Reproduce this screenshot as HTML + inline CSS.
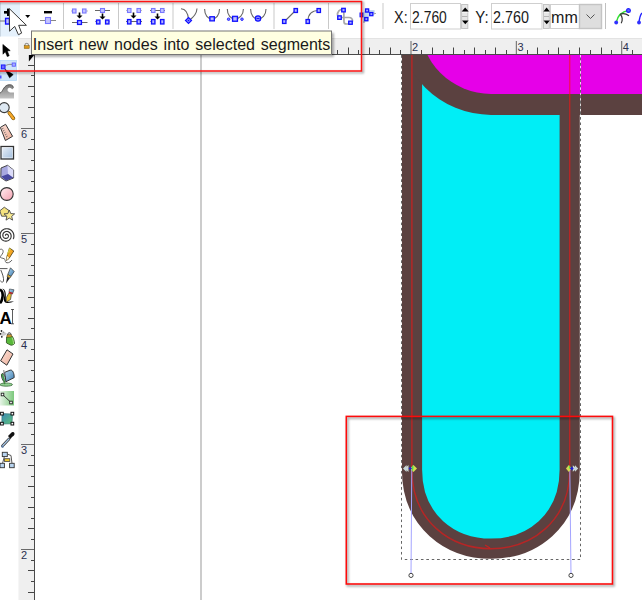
<!DOCTYPE html>
<html><head><meta charset="utf-8">
<style>
html,body{margin:0;padding:0;background:#fff;overflow:hidden;}
body{width:642px;height:600px;position:relative;font-family:"Liberation Sans",sans-serif;}
svg{position:absolute;left:0;top:0;}
.rl{font-family:"Liberation Sans",sans-serif;font-size:11px;fill:#2a3050;}
.tt{font-family:"Liberation Sans",sans-serif;font-size:17px;fill:#1a1a1a;word-spacing:1.5px;}
.ui{font-family:"Liberation Sans",sans-serif;font-size:15.6px;fill:#1a1a1a;}
</style></head><body>
<svg width="642" height="600" viewBox="0 0 642 600">
<defs>
<filter id="blur1" x="-10%" y="-10%" width="120%" height="120%"><feGaussianBlur stdDeviation="1"/></filter>
<filter id="sh" x="-5%" y="-5%" width="110%" height="110%"><feDropShadow dx="1" dy="1.5" stdDeviation="1" flood-color="#000" flood-opacity="0.35"/></filter>
</defs>
<rect x="0" y="0" width="642" height="600" fill="#fff"/>
<!-- canvas -->
<rect x="200.25" y="55" width="1.5" height="545" fill="#bcbcbc"/>
<path d="M412,20 V468.5 C411,575.4 571,575.4 569.7,468.5 V20 Z" fill="#00eef6" stroke="#5b4140" stroke-width="20.2"/>
<path d="M398,22 L398,20 H700 V114.9 H491 A92.9,92.9 0 0 1 398.1,22 Z" fill="#5b4140"/>
<path d="M419.7,20 H700 V93.9 H491 A71.4,71.4 0 0 1 419.6,22.5 Z" fill="#e600e8"/>
<!-- bbox dashed -->
<g stroke="#666" stroke-width="1" stroke-dasharray="2.8,2.6" fill="none">
<path d="M401.5,55 V559.5 H580.5 V55"/>
</g>
<g stroke="#fff" stroke-width="1" stroke-dasharray="2.4,3" stroke-dashoffset="-3" fill="none" opacity="0.8">
<path d="M401.5,55 V559.5 H580.5 V55"/>
</g>
<!-- red path outline -->
<path d="M411.9,55 V468.5 C411,575.4 571,575.4 569.7,468.5 V55" fill="none" stroke="#ff1010" stroke-opacity="0.56" stroke-width="1.45"/>
<path d="M485,545 L490,548" stroke="#ff1010" stroke-opacity="0.62" stroke-width="1.4" fill="none"/>
<!-- handles -->
<line x1="411.8" y1="468.5" x2="411" y2="575.4" stroke="#a4a4ff" stroke-width="1"/>
<line x1="569.8" y1="468.5" x2="571" y2="575.4" stroke="#a4a4ff" stroke-width="1"/>
<circle cx="411" cy="575.4" r="2.1" fill="#fff" stroke="#333" stroke-width="0.9"/>
<circle cx="571" cy="575.4" r="2.1" fill="#fff" stroke="#333" stroke-width="0.9"/>
<!-- left node -->
<path d="M403,468.5 L406.5,465 L406.5,466.8 L408.5,465 L408.5,472 L406.5,470.2 L406.5,472 Z" fill="#c8d6d6"/>
<path d="M413.5,465 L417,468.5 L413.5,472 L410,468.5 Z" fill="#d8dc50"/>
<path d="M412,465.2 L413.6,466.8 L413.2,470 L412,471.6 Z" fill="#50e050"/>
<path d="M410.3,466.8 L412,468.5 L410.3,470.2 L408.6,468.5 Z" fill="#2020d0"/>
<!-- right node -->
<path d="M578.2,468.5 L575,465.2 L575,466.9 L572.8,465.2 L572.8,471.8 L575,470.1 L575,471.8 Z" fill="#c8d6d6"/>
<path d="M568.8,465 L571.6,468.5 L568.8,472 L566,468.5 Z" fill="#d4d850"/>
<path d="M569.3,465.4 L570.8,467.4 L569.6,469 L568.9,467 Z" fill="#50e050"/>
<path d="M571.8,466.6 L573.7,468.5 L571.8,470.4 L569.9,468.5 Z" fill="#2020d0"/>
<!-- lower red rect -->
<rect x="346.3" y="416.4" width="266.2" height="167.6" fill="none" stroke="#000" stroke-opacity="0.32" stroke-width="2.2" transform="translate(1.3,1.6)" filter="url(#blur1)"/>
<rect x="346.3" y="416.4" width="266.2" height="167.6" fill="none" stroke="#ff0a0a" stroke-width="1.55"/>

<!-- rulers -->
<rect x="35" y="38" width="607" height="16" fill="#efefef"/>
<rect x="18" y="55" width="16" height="545" fill="#efefef"/>
<rect x="18" y="55" width="1" height="545" fill="#f6f6f6"/>
<rect x="18" y="38" width="17" height="17" fill="#efefef"/>
<rect x="18" y="38" width="624" height="1" fill="#e3e3e3"/>
<rect x="35" y="54" width="607" height="1" fill="#4a4a4a"/>
<rect x="34" y="55" width="1" height="545" fill="#4a4a4a"/>
<line x1="42.5" y1="50" x2="42.5" y2="54" stroke="#444" stroke-width="1"/>
<line x1="53.5" y1="47.5" x2="53.5" y2="54" stroke="#444" stroke-width="1"/>
<line x1="63.5" y1="50" x2="63.5" y2="54" stroke="#444" stroke-width="1"/>
<line x1="74.5" y1="47.5" x2="74.5" y2="54" stroke="#444" stroke-width="1"/>
<line x1="84.5" y1="50" x2="84.5" y2="54" stroke="#444" stroke-width="1"/>
<line x1="94.95" y1="41" x2="94.95" y2="54" stroke="#707070" stroke-width="1.1"/>
<text x="96.05" y="51" class="rl">-1</text>
<line x1="105.5" y1="50" x2="105.5" y2="54" stroke="#444" stroke-width="1"/>
<line x1="116.5" y1="47.5" x2="116.5" y2="54" stroke="#444" stroke-width="1"/>
<line x1="126.5" y1="50" x2="126.5" y2="54" stroke="#444" stroke-width="1"/>
<line x1="137.5" y1="47.5" x2="137.5" y2="54" stroke="#444" stroke-width="1"/>
<line x1="148.5" y1="50" x2="148.5" y2="54" stroke="#444" stroke-width="1"/>
<line x1="158.5" y1="47.5" x2="158.5" y2="54" stroke="#444" stroke-width="1"/>
<line x1="169.5" y1="50" x2="169.5" y2="54" stroke="#444" stroke-width="1"/>
<line x1="179.5" y1="47.5" x2="179.5" y2="54" stroke="#444" stroke-width="1"/>
<line x1="190.5" y1="50" x2="190.5" y2="54" stroke="#444" stroke-width="1"/>
<line x1="200.30" y1="41" x2="200.30" y2="54" stroke="#707070" stroke-width="1.1"/>
<text x="201.40" y="51" class="rl">0</text>
<line x1="211.5" y1="50" x2="211.5" y2="54" stroke="#444" stroke-width="1"/>
<line x1="221.5" y1="47.5" x2="221.5" y2="54" stroke="#444" stroke-width="1"/>
<line x1="232.5" y1="50" x2="232.5" y2="54" stroke="#444" stroke-width="1"/>
<line x1="242.5" y1="47.5" x2="242.5" y2="54" stroke="#444" stroke-width="1"/>
<line x1="253.5" y1="50" x2="253.5" y2="54" stroke="#444" stroke-width="1"/>
<line x1="263.5" y1="47.5" x2="263.5" y2="54" stroke="#444" stroke-width="1"/>
<line x1="274.5" y1="50" x2="274.5" y2="54" stroke="#444" stroke-width="1"/>
<line x1="284.5" y1="47.5" x2="284.5" y2="54" stroke="#444" stroke-width="1"/>
<line x1="295.5" y1="50" x2="295.5" y2="54" stroke="#444" stroke-width="1"/>
<line x1="305.65" y1="41" x2="305.65" y2="54" stroke="#707070" stroke-width="1.1"/>
<text x="306.75" y="51" class="rl">1</text>
<line x1="316.5" y1="50" x2="316.5" y2="54" stroke="#444" stroke-width="1"/>
<line x1="327.5" y1="47.5" x2="327.5" y2="54" stroke="#444" stroke-width="1"/>
<line x1="337.5" y1="50" x2="337.5" y2="54" stroke="#444" stroke-width="1"/>
<line x1="348.5" y1="47.5" x2="348.5" y2="54" stroke="#444" stroke-width="1"/>
<line x1="358.5" y1="50" x2="358.5" y2="54" stroke="#444" stroke-width="1"/>
<line x1="369.5" y1="47.5" x2="369.5" y2="54" stroke="#444" stroke-width="1"/>
<line x1="379.5" y1="50" x2="379.5" y2="54" stroke="#444" stroke-width="1"/>
<line x1="390.5" y1="47.5" x2="390.5" y2="54" stroke="#444" stroke-width="1"/>
<line x1="400.5" y1="50" x2="400.5" y2="54" stroke="#444" stroke-width="1"/>
<line x1="411.00" y1="41" x2="411.00" y2="54" stroke="#707070" stroke-width="1.1"/>
<text x="412.10" y="51" class="rl">2</text>
<line x1="421.5" y1="50" x2="421.5" y2="54" stroke="#444" stroke-width="1"/>
<line x1="432.5" y1="47.5" x2="432.5" y2="54" stroke="#444" stroke-width="1"/>
<line x1="443.5" y1="50" x2="443.5" y2="54" stroke="#444" stroke-width="1"/>
<line x1="453.5" y1="47.5" x2="453.5" y2="54" stroke="#444" stroke-width="1"/>
<line x1="464.5" y1="50" x2="464.5" y2="54" stroke="#444" stroke-width="1"/>
<line x1="474.5" y1="47.5" x2="474.5" y2="54" stroke="#444" stroke-width="1"/>
<line x1="485.5" y1="50" x2="485.5" y2="54" stroke="#444" stroke-width="1"/>
<line x1="495.5" y1="47.5" x2="495.5" y2="54" stroke="#444" stroke-width="1"/>
<line x1="506.5" y1="50" x2="506.5" y2="54" stroke="#444" stroke-width="1"/>
<line x1="516.35" y1="41" x2="516.35" y2="54" stroke="#707070" stroke-width="1.1"/>
<text x="517.45" y="51" class="rl">3</text>
<line x1="527.5" y1="50" x2="527.5" y2="54" stroke="#444" stroke-width="1"/>
<line x1="537.5" y1="47.5" x2="537.5" y2="54" stroke="#444" stroke-width="1"/>
<line x1="548.5" y1="50" x2="548.5" y2="54" stroke="#444" stroke-width="1"/>
<line x1="558.5" y1="47.5" x2="558.5" y2="54" stroke="#444" stroke-width="1"/>
<line x1="569.5" y1="50" x2="569.5" y2="54" stroke="#444" stroke-width="1"/>
<line x1="579.5" y1="47.5" x2="579.5" y2="54" stroke="#444" stroke-width="1"/>
<line x1="590.5" y1="50" x2="590.5" y2="54" stroke="#444" stroke-width="1"/>
<line x1="601.5" y1="47.5" x2="601.5" y2="54" stroke="#444" stroke-width="1"/>
<line x1="611.5" y1="50" x2="611.5" y2="54" stroke="#444" stroke-width="1"/>
<line x1="621.70" y1="41" x2="621.70" y2="54" stroke="#707070" stroke-width="1.1"/>
<text x="622.80" y="51" class="rl">4</text>
<line x1="632.5" y1="50" x2="632.5" y2="54" stroke="#444" stroke-width="1"/>
<line x1="28" y1="65.5" x2="34" y2="65.5" stroke="#444" stroke-width="1"/>
<line x1="31" y1="75.5" x2="34" y2="75.5" stroke="#444" stroke-width="1"/>
<line x1="28" y1="86.5" x2="34" y2="86.5" stroke="#444" stroke-width="1"/>
<line x1="31" y1="96.5" x2="34" y2="96.5" stroke="#444" stroke-width="1"/>
<line x1="28" y1="107.5" x2="34" y2="107.5" stroke="#444" stroke-width="1"/>
<line x1="31" y1="117.5" x2="34" y2="117.5" stroke="#444" stroke-width="1"/>
<line x1="21" y1="128.5" x2="34" y2="128.5" stroke="#6a6a6a" stroke-width="1"/>
<text x="21" y="137.6" class="rl">6</text>
<line x1="31" y1="139.5" x2="34" y2="139.5" stroke="#444" stroke-width="1"/>
<line x1="28" y1="149.5" x2="34" y2="149.5" stroke="#444" stroke-width="1"/>
<line x1="31" y1="160.5" x2="34" y2="160.5" stroke="#444" stroke-width="1"/>
<line x1="28" y1="170.5" x2="34" y2="170.5" stroke="#444" stroke-width="1"/>
<line x1="31" y1="181.5" x2="34" y2="181.5" stroke="#444" stroke-width="1"/>
<line x1="28" y1="191.5" x2="34" y2="191.5" stroke="#444" stroke-width="1"/>
<line x1="31" y1="202.5" x2="34" y2="202.5" stroke="#444" stroke-width="1"/>
<line x1="28" y1="212.5" x2="34" y2="212.5" stroke="#444" stroke-width="1"/>
<line x1="31" y1="223.5" x2="34" y2="223.5" stroke="#444" stroke-width="1"/>
<line x1="21" y1="233.5" x2="34" y2="233.5" stroke="#6a6a6a" stroke-width="1"/>
<text x="21" y="242.6" class="rl">5</text>
<line x1="31" y1="244.5" x2="34" y2="244.5" stroke="#444" stroke-width="1"/>
<line x1="28" y1="254.5" x2="34" y2="254.5" stroke="#444" stroke-width="1"/>
<line x1="31" y1="265.5" x2="34" y2="265.5" stroke="#444" stroke-width="1"/>
<line x1="28" y1="275.5" x2="34" y2="275.5" stroke="#444" stroke-width="1"/>
<line x1="31" y1="286.5" x2="34" y2="286.5" stroke="#444" stroke-width="1"/>
<line x1="28" y1="297.5" x2="34" y2="297.5" stroke="#444" stroke-width="1"/>
<line x1="31" y1="307.5" x2="34" y2="307.5" stroke="#444" stroke-width="1"/>
<line x1="28" y1="318.5" x2="34" y2="318.5" stroke="#444" stroke-width="1"/>
<line x1="31" y1="328.5" x2="34" y2="328.5" stroke="#444" stroke-width="1"/>
<line x1="21" y1="339.5" x2="34" y2="339.5" stroke="#6a6a6a" stroke-width="1"/>
<text x="21" y="348.6" class="rl">4</text>
<line x1="31" y1="349.5" x2="34" y2="349.5" stroke="#444" stroke-width="1"/>
<line x1="28" y1="360.5" x2="34" y2="360.5" stroke="#444" stroke-width="1"/>
<line x1="31" y1="370.5" x2="34" y2="370.5" stroke="#444" stroke-width="1"/>
<line x1="28" y1="381.5" x2="34" y2="381.5" stroke="#444" stroke-width="1"/>
<line x1="31" y1="391.5" x2="34" y2="391.5" stroke="#444" stroke-width="1"/>
<line x1="28" y1="402.5" x2="34" y2="402.5" stroke="#444" stroke-width="1"/>
<line x1="31" y1="412.5" x2="34" y2="412.5" stroke="#444" stroke-width="1"/>
<line x1="28" y1="423.5" x2="34" y2="423.5" stroke="#444" stroke-width="1"/>
<line x1="31" y1="434.5" x2="34" y2="434.5" stroke="#444" stroke-width="1"/>
<line x1="21" y1="444.5" x2="34" y2="444.5" stroke="#6a6a6a" stroke-width="1"/>
<text x="21" y="453.6" class="rl">3</text>
<line x1="31" y1="455.5" x2="34" y2="455.5" stroke="#444" stroke-width="1"/>
<line x1="28" y1="465.5" x2="34" y2="465.5" stroke="#444" stroke-width="1"/>
<line x1="31" y1="476.5" x2="34" y2="476.5" stroke="#444" stroke-width="1"/>
<line x1="28" y1="486.5" x2="34" y2="486.5" stroke="#444" stroke-width="1"/>
<line x1="31" y1="497.5" x2="34" y2="497.5" stroke="#444" stroke-width="1"/>
<line x1="28" y1="507.5" x2="34" y2="507.5" stroke="#444" stroke-width="1"/>
<line x1="31" y1="518.5" x2="34" y2="518.5" stroke="#444" stroke-width="1"/>
<line x1="28" y1="528.5" x2="34" y2="528.5" stroke="#444" stroke-width="1"/>
<line x1="31" y1="539.5" x2="34" y2="539.5" stroke="#444" stroke-width="1"/>
<line x1="21" y1="549.5" x2="34" y2="549.5" stroke="#6a6a6a" stroke-width="1"/>
<text x="21" y="558.6" class="rl">2</text>
<line x1="31" y1="560.5" x2="34" y2="560.5" stroke="#444" stroke-width="1"/>
<line x1="28" y1="570.5" x2="34" y2="570.5" stroke="#444" stroke-width="1"/>
<line x1="31" y1="581.5" x2="34" y2="581.5" stroke="#444" stroke-width="1"/>
<line x1="28" y1="592.5" x2="34" y2="592.5" stroke="#444" stroke-width="1"/>
<rect x="0" y="0" width="642" height="38" fill="#fff"/>
<rect x="0" y="2.5" width="20" height="34" fill="#e5f1fc"/>
<rect x="0" y="2.5" width="1" height="34" fill="#c9d6e2"/>
<line x1="0" y1="21" x2="12" y2="21" stroke="#777" stroke-width="1"/>
<rect x="4" y="11" width="6" height="2.6" fill="#000"/>
<rect x="7" y="8.6" width="2.2" height="7.4" fill="#000"/>
<rect x="5.5" y="18.3" width="4" height="5.8" fill="#7a7aff" stroke="#1010ff" stroke-width="1.2"/><rect x="6.6" y="19.400000000000002" width="1.7999999999999998" height="3.5999999999999996" fill="#c0c0ff"/>
<path d="M25.2,15 L30.2,15 L27.7,18 Z" fill="#000"/>
<rect x="44" y="11" width="8" height="2.4" fill="#000"/>
<line x1="40" y1="20.5" x2="56" y2="20.5" stroke="#888" stroke-width="1"/>
<rect x="45.5" y="17.5" width="5" height="6" fill="#c4c4ff" stroke="#7878ff" stroke-width="1.1"/>
<rect x="63" y="3" width="1" height="26" fill="#c9c9c9"/>
<line x1="71" y1="11" x2="88" y2="11" stroke="#bbb" stroke-width="1" stroke-dasharray="2,9,2"/>
<rect x="72.5" y="9.0" width="3.5" height="4" fill="#c4c4ff" stroke="#7878ff" stroke-width="1.1"/>
<rect x="82.5" y="9.0" width="3.5" height="4" fill="#c4c4ff" stroke="#7878ff" stroke-width="1.1"/>
<line x1="79.5" y1="12.5" x2="79.5" y2="16.5" stroke="#000" stroke-width="1.6"/><path d="M76.5,15.5 L82.5,15.5 L79.5,18.5 Z" fill="#000"/>
<line x1="72" y1="22.5" x2="87.5" y2="22.5" stroke="#666" stroke-width="1"/>
<rect x="77.5" y="20.5" width="4" height="4" fill="#7a7aff" stroke="#1010ff" stroke-width="1.2"/><rect x="78.6" y="21.6" width="1.7999999999999998" height="1.7999999999999998" fill="#c0c0ff"/>
<line x1="95" y1="10.5" x2="110" y2="10.5" stroke="#666" stroke-width="1"/>
<rect x="100.5" y="8.5" width="4" height="4" fill="#c4c4ff" stroke="#7878ff" stroke-width="1.1"/>
<line x1="102.5" y1="13.5" x2="102.5" y2="17.5" stroke="#000" stroke-width="1.6"/><path d="M99.5,16.5 L105.5,16.5 L102.5,19.5 Z" fill="#000"/>
<line x1="95" y1="21.5" x2="110" y2="21.5" stroke="#999" stroke-width="1" stroke-dasharray="1.5,11.5,1.5"/>
<rect x="96.5" y="20.0" width="3.5" height="4" fill="#7a7aff" stroke="#1010ff" stroke-width="1.2"/><rect x="97.6" y="21.1" width="1.2999999999999998" height="1.7999999999999998" fill="#c0c0ff"/>
<rect x="105.5" y="20.0" width="3.5" height="4" fill="#7a7aff" stroke="#1010ff" stroke-width="1.2"/><rect x="106.6" y="21.1" width="1.2999999999999998" height="1.7999999999999998" fill="#c0c0ff"/>
<rect x="118" y="3" width="1" height="26" fill="#c9c9c9"/>
<rect x="127.5" y="8.5" width="3.5" height="4" fill="#c4c4ff" stroke="#7878ff" stroke-width="1.1"/>
<rect x="137.0" y="8.5" width="3.5" height="4" fill="#c4c4ff" stroke="#7878ff" stroke-width="1.1"/>
<line x1="126" y1="10.5" x2="142" y2="10.5" stroke="#bbb" stroke-width="1" stroke-dasharray="1,14,1"/>
<line x1="133.5" y1="12.5" x2="133.5" y2="16.5" stroke="#000" stroke-width="1.6"/><path d="M130.5,15.5 L136.5,15.5 L133.5,18.5 Z" fill="#000"/>
<line x1="126" y1="21.5" x2="142" y2="21.5" stroke="#666" stroke-width="1"/>
<rect x="127.5" y="19.5" width="3.5" height="4.5" fill="#7a7aff" stroke="#1010ff" stroke-width="1.2"/><rect x="128.6" y="20.6" width="1.2999999999999998" height="2.3" fill="#c0c0ff"/>
<rect x="137.0" y="19.5" width="3.5" height="4.5" fill="#7a7aff" stroke="#1010ff" stroke-width="1.2"/><rect x="138.1" y="20.6" width="1.2999999999999998" height="2.3" fill="#c0c0ff"/>
<line x1="150" y1="10.5" x2="165" y2="10.5" stroke="#666" stroke-width="1"/>
<rect x="151.5" y="8.5" width="3.5" height="4" fill="#c4c4ff" stroke="#7878ff" stroke-width="1.1"/>
<rect x="160.5" y="8.5" width="3.5" height="4" fill="#c4c4ff" stroke="#7878ff" stroke-width="1.1"/>
<line x1="157.5" y1="13.5" x2="157.5" y2="17.5" stroke="#000" stroke-width="1.6"/><path d="M154.5,16.5 L160.5,16.5 L157.5,19.5 Z" fill="#000"/>
<line x1="150" y1="21.5" x2="165" y2="21.5" stroke="#999" stroke-width="1" stroke-dasharray="1,14,1"/>
<rect x="151.5" y="19.5" width="3.5" height="4.5" fill="#7a7aff" stroke="#1010ff" stroke-width="1.2"/><rect x="152.6" y="20.6" width="1.2999999999999998" height="2.3" fill="#c0c0ff"/>
<rect x="160.5" y="19.5" width="3.5" height="4.5" fill="#7a7aff" stroke="#1010ff" stroke-width="1.2"/><rect x="161.6" y="20.6" width="1.2999999999999998" height="2.3" fill="#c0c0ff"/>
<rect x="172.5" y="3" width="1" height="26" fill="#c9c9c9"/>
<path d="M181,8.8 C185,9 188,13 188.5,19.5" fill="none" stroke="#666" stroke-width="1.1"/>
<path d="M197,8.5 C196.8,13 194,17 189,20.5" fill="none" stroke="#666" stroke-width="1.1"/>
<path d="M188.5,17.5 L191.5,20.5 L188.5,23.5 L185.5,20.5 Z" fill="#9090ff" stroke="#1010ff" stroke-width="1.2"/>
<circle cx="188.5" cy="20.5" r="0.8" fill="#1010ff"/>
<path d="M204.6,9 C204.6,15.5 208,19 212,19 C216,19 219.5,15.5 219.5,9" fill="none" stroke="#666" stroke-width="1.1"/>
<rect x="209.8" y="16.7" width="4.6" height="4.2" fill="#7a7aff" stroke="#1010ff" stroke-width="1.2"/><rect x="210.9" y="17.8" width="2.3999999999999995" height="2.0" fill="#c0c0ff"/>
<path d="M227.3,9 C227.3,15.5 231,19 235,19 C239,19 243.4,15.5 243.4,9" fill="none" stroke="#666" stroke-width="1.1"/>
<rect x="232.5" y="16.3" width="5" height="5" fill="#7a7aff" stroke="#1010ff" stroke-width="1.2"/><rect x="233.6" y="17.400000000000002" width="2.8" height="2.8" fill="#c0c0ff"/>
<circle cx="228.6" cy="19.2" r="1.3" fill="#8080ff" stroke="#1010ff" stroke-width="0.8"/>
<circle cx="242" cy="19.2" r="1.3" fill="#8080ff" stroke="#1010ff" stroke-width="0.8"/>
<path d="M250.6,9 C250.6,15.5 254,19 258,19 C262,19 266,15.5 266,9" fill="none" stroke="#666" stroke-width="1.1"/>
<circle cx="258" cy="18.5" r="2.7" fill="#9090ff" stroke="#1010ff" stroke-width="1.2"/>
<rect x="256.5" y="18" width="3" height="1" fill="#1010ff"/>
<rect x="273.5" y="3" width="1" height="26" fill="#c9c9c9"/>
<line x1="284.5" y1="21.5" x2="295.5" y2="10.5" stroke="#666" stroke-width="1.1"/>
<rect x="282.5" y="19.5" width="3.5" height="4" fill="#7a7aff" stroke="#1010ff" stroke-width="1.2"/><rect x="283.6" y="20.6" width="1.2999999999999998" height="1.7999999999999998" fill="#c0c0ff"/>
<rect x="294.0" y="8.5" width="3.5" height="4" fill="#7a7aff" stroke="#1010ff" stroke-width="1.2"/><rect x="295.1" y="9.6" width="1.2999999999999998" height="1.7999999999999998" fill="#c0c0ff"/>
<path d="M308,21 C308,15 311,10.5 319,10.5" fill="none" stroke="#666" stroke-width="1.1"/>
<rect x="306.0" y="19.5" width="3.5" height="4" fill="#7a7aff" stroke="#1010ff" stroke-width="1.2"/><rect x="307.1" y="20.6" width="1.2999999999999998" height="1.7999999999999998" fill="#c0c0ff"/>
<rect x="317.0" y="8.5" width="3.5" height="4" fill="#7a7aff" stroke="#1010ff" stroke-width="1.2"/><rect x="318.1" y="9.6" width="1.2999999999999998" height="1.7999999999999998" fill="#c0c0ff"/>
<rect x="328" y="3" width="1" height="26" fill="#c9c9c9"/>
<path d="M343.5,9.5 C339.5,9 337.2,11.5 337.5,15.5 M343.8,11 L344,22 C344,23.5 345,24 346.5,24 L350,24 M340,17.5 L349,17.5 C351.5,17.5 352.6,19 352.6,21.5" fill="none" stroke="#a8a8a8" stroke-width="1.7"/>
<rect x="341.7" y="8.3" width="3.5999999999999996" height="3.5999999999999996" fill="#7a7aff" stroke="#1010ff" stroke-width="1.2"/><rect x="342.8" y="9.4" width="1.3999999999999995" height="1.3999999999999995" fill="#c0c0ff"/>
<rect x="337.7" y="15.8" width="3.5999999999999996" height="3.5999999999999996" fill="#7a7aff" stroke="#1010ff" stroke-width="1.2"/><rect x="338.8" y="16.900000000000002" width="1.3999999999999995" height="1.3999999999999995" fill="#c0c0ff"/>
<rect x="348.7" y="21.1" width="3.5999999999999996" height="3.2" fill="#7a7aff" stroke="#1010ff" stroke-width="1.2"/><rect x="349.8" y="22.200000000000003" width="1.3999999999999995" height="1.0" fill="#c0c0ff"/>
<path d="M366,10 L374.5,10 L375,14.5 L369,16 L368.5,21.5 L363.5,22.5 L361.5,14 Z" fill="#c4d8f0"/>
<path d="M374,13.5 L376,13.5 M364,21 L364,23" stroke="#aaa" stroke-width="1.2"/>
<rect x="360.1" y="13.1" width="2.6" height="3.5999999999999996" fill="#7a7aff" stroke="#1010ff" stroke-width="1.2"/><rect x="361.20000000000005" y="14.2" width="0.3999999999999999" height="1.3999999999999995" fill="#c0c0ff"/>
<rect x="365.5" y="8.9" width="3.2" height="3.2" fill="#7a7aff" stroke="#1010ff" stroke-width="1.2"/><rect x="366.6" y="10.0" width="1.0" height="1.0" fill="#c0c0ff"/>
<rect x="369.7" y="12.5" width="3.2" height="3.2" fill="#7a7aff" stroke="#1010ff" stroke-width="1.2"/><rect x="370.8" y="13.6" width="1.0" height="1.0" fill="#c0c0ff"/>
<rect x="364.7" y="17.5" width="3.2" height="3.2" fill="#7a7aff" stroke="#1010ff" stroke-width="1.2"/><rect x="365.8" y="18.6" width="1.0" height="1.0" fill="#c0c0ff"/>
<rect x="382.5" y="3" width="1" height="26" fill="#c9c9c9"/>
<text x="0" y="22.8" class="ui" transform="translate(394.1,0) scale(0.92,1)">X:</text>
<rect x="410.5" y="3.5" width="50" height="25.5" fill="#fff" stroke="#cfcfcf" stroke-width="1"/>
<text x="0" y="22.8" class="ui" transform="translate(412.1,0) scale(0.89,1)">2.760</text>
<rect x="461.6" y="4.5" width="6.2" height="24" fill="#e6e6e6" stroke="#c4c4c4" stroke-width="1"/>
<rect x="462" y="12" width="5.5" height="1" fill="#f4f4f4"/>
<rect x="462" y="16" width="5.5" height="1" fill="#b4b4b4"/>
<rect x="462" y="20" width="5.5" height="1" fill="#f4f4f4"/>
<path d="M461.7,11.6 L468.7,11.6 L465.2,7.6 Z" fill="#000"/>
<path d="M462,20.4 L468.6,20.4 L465.3,24.2 Z" fill="#000"/>
<text x="0" y="22.8" class="ui" transform="translate(475.3,0) scale(0.96,1)">Y:</text>
<rect x="491.5" y="3.5" width="50.5" height="25.5" fill="#fff" stroke="#cfcfcf" stroke-width="1"/>
<text x="0" y="22.8" class="ui" transform="translate(493.1,0) scale(0.92,1)">2.760</text>
<rect x="543.5" y="4.5" width="5.8" height="24" fill="#e6e6e6" stroke="#c4c4c4" stroke-width="1"/>
<rect x="544" y="12" width="5" height="1" fill="#f4f4f4"/>
<rect x="544" y="16" width="5" height="1" fill="#b4b4b4"/>
<rect x="544" y="20" width="5" height="1" fill="#f4f4f4"/>
<path d="M543.4,11.6 L549.8,11.6 L546.6,7.6 Z" fill="#000"/>
<path d="M543.6,20.4 L549.8,20.4 L546.7,24.2 Z" fill="#000"/>
<rect x="550.5" y="4.5" width="51" height="24" fill="#fff" stroke="#cfcfcf" stroke-width="1"/>
<rect x="579.5" y="4.5" width="22" height="24" fill="#dedede" stroke="#c4c4c4" stroke-width="1.4"/>
<path d="M586.5,14.5 L590.5,18.5 L594.5,14.5" fill="none" stroke="#555" stroke-width="1"/>
<text x="0" y="22.8" class="ui" transform="translate(551,0) scale(1.03,1)">mm</text>
<rect x="605" y="3" width="1" height="26" fill="#c0c0c0"/>
<path d="M616.2,22.5 C617.5,16 622,11.5 628.5,10.5" fill="none" stroke="#33dd33" stroke-width="1.4"/>
<path d="M621.2,23.2 C622.8,20.5 622.6,16.5 620.2,14.2 M620.2,14.2 C623,13.2 626.5,14 629,15.8" fill="none" stroke="#333" stroke-width="1.2"/>
<circle cx="616.2" cy="22.5" r="1.9" fill="#3030ff"/>
<circle cx="628.5" cy="10.5" r="1.9" fill="#6060ff" stroke="#2020ff" stroke-width="1.2"/>
<path d="M639,22.5 C639.5,18 641,14 642,13" fill="none" stroke="#2020ff" stroke-width="1.4"/>
<circle cx="639" cy="22.5" r="1.9" fill="#3030ff"/>
<path d="M9.3,8.6 L9.6,31.2 L14.7,26.4 L18.4,34.7 L21.6,33.1 L18.7,25.3 L26.4,25.3 Z" fill="#fff" stroke="#222" stroke-width="0.9" stroke-linejoin="miter"/>
<rect x="0" y="38" width="18" height="562" fill="#fff"/>
<defs>
<linearGradient id="gRect" x1="0" y1="0" x2="1" y2="1"><stop offset="0" stop-color="#eef3fa"/><stop offset="1" stop-color="#9fbcdc"/></linearGradient>
<linearGradient id="gPink" x1="0" y1="0" x2="1" y2="1"><stop offset="0" stop-color="#fff0f2"/><stop offset="1" stop-color="#f4a0b0"/></linearGradient>
<linearGradient id="gSkin" x1="0" y1="0" x2="1" y2="1"><stop offset="0" stop-color="#fbe0d8"/><stop offset="1" stop-color="#eeb09a"/></linearGradient>
<linearGradient id="gWave" x1="0" y1="0" x2="0" y2="1"><stop offset="0" stop-color="#777"/><stop offset="1" stop-color="#c4c4c4"/></linearGradient>
<linearGradient id="gGrad" x1="0" y1="0" x2="1" y2="0"><stop offset="0" stop-color="#e6f4e6"/><stop offset="1" stop-color="#7cc87c"/></linearGradient>
<linearGradient id="gMesh" x1="0" y1="0" x2="1" y2="1"><stop offset="0" stop-color="#3d88b8"/><stop offset="1" stop-color="#5cc478"/></linearGradient>
<linearGradient id="gBlue" x1="0" y1="0" x2="1" y2="1"><stop offset="0" stop-color="#b8dcf0"/><stop offset="1" stop-color="#3878b0"/></linearGradient>
</defs>
<path d="M2.9,44.5 L3,54.2 L5.3,51.8 L7.3,56.6 L9.2,55.7 L7.3,51 L10.2,50.6 Z" fill="#000" stroke="#000" stroke-width="0.6" stroke-linejoin="round"/>
<rect x="0" y="60.5" width="16.5" height="20" fill="#cfe5f8" stroke="#b4d8f6" stroke-width="0.8"/>
<path d="M5.2,66 C7,64.6 9,64.2 12,64.4" fill="none" stroke="#8a8a8a" stroke-width="1"/>
<rect x="12.2" y="63" width="3.2" height="3.2" fill="#a8b0ff" stroke="#5a5aff" stroke-width="0.9"/>
<rect x="1.4" y="65" width="3.6" height="3.8" fill="#6a6aff" stroke="#2020ff" stroke-width="1.1"/>
<rect x="-0.5" y="75.5" width="2" height="3" fill="#5050ff"/>
<path d="M5,69.4 L13.2,74.6 L9.6,77.8 Z" fill="#000" stroke="#000" stroke-width="0.6" stroke-linejoin="round"/>
<path d="M0,93 C2.6,92.5 3.2,86.4 7.6,85 C10.6,84 13.4,85.2 13.4,87.8 C13.4,89.2 12,89.6 11.4,88.6 C10.4,87.2 8.2,87.4 7.6,89.2 C7.2,90.8 8.4,92.2 10.2,92.4 L14,92.4 L14,98.6 L0,98.6 Z" fill="url(#gWave)"/>
<path d="M0,93 C2.6,92.5 3.2,86.4 7.6,85 C10.6,84 13.4,85.2 13.4,87.8" fill="none" stroke="#444" stroke-width="0.8"/>
<line x1="9.3" y1="113" x2="13.4" y2="118.4" stroke="#6a4a00" stroke-width="3.6" stroke-linecap="round"/>
<line x1="9.3" y1="113" x2="13.4" y2="118.4" stroke="#f6a82a" stroke-width="2.4" stroke-linecap="round"/>
<circle cx="4.2" cy="107.6" r="5" fill="#dde8f2" stroke="#3a3a3a" stroke-width="1.1"/>
<path d="M0.4,127.4 L5.6,124.3 L12.6,136.3 L5.4,140.5 Z" fill="url(#gSkin)" stroke="#333" stroke-width="1"/>
<path d="M2,129 L3.5,128.2 M3,131 L4.5,130.2 M4,133 L5.5,132.2 M5,135 L6.5,134.2 M6,137 L7.5,136.2" stroke="#555" stroke-width="0.8"/>
<rect x="1" y="146.5" width="12.5" height="12.5" fill="url(#gRect)" stroke="#333" stroke-width="1.3"/>
<rect x="2.2" y="147.7" width="10.1" height="10.1" fill="none" stroke="#fff" stroke-width="0.6" opacity="0.8"/>
<path d="M7.5,165.3 L13.6,170 L13.6,178 L6,181 L0.8,177.5 L1,168 Z" fill="#a8a8e0" stroke="#444" stroke-width="1"/>
<path d="M7.5,165.6 L13.3,170 L13.3,177.8 L8,174 Z" fill="#dcdcf8"/>
<path d="M1.3,176.5 L8,174 L13.3,177.8 L6,180.5 Z" fill="#4848a0"/>
<circle cx="6.8" cy="194" r="6.4" fill="url(#gPink)" stroke="#333" stroke-width="1.1"/>
<path d="M4.3,207.2 L9.2,210.6 L7.6,216.2 L1.6,216.2 L-0.2,210.8 Z" fill="#f4e27e" stroke="#4a4a4a" stroke-width="0.9" stroke-linejoin="round"/>
<path d="M9.30,210.00 L10.77,213.58 L14.63,213.87 L11.68,216.37 L12.59,220.13 L9.30,218.10 L6.01,220.13 L6.92,216.37 L3.97,213.87 L7.83,213.58 Z" fill="#f8ea90" stroke="#4a4a4a" stroke-width="0.9" stroke-linejoin="round"/>
<path d="M5.71,235.69 L5.64,235.61 L5.58,235.52 L5.54,235.41 L5.52,235.28 L5.52,235.15 L5.54,235.01 L5.59,234.87 L5.66,234.73 L5.75,234.60 L5.87,234.48 L6.01,234.37 L6.18,234.29 L6.36,234.22 L6.56,234.18 L6.76,234.17 L6.98,234.20 L7.20,234.25 L7.41,234.34 L7.62,234.46 L7.81,234.62 L7.98,234.81 L8.13,235.03 L8.25,235.27 L8.34,235.54 L8.39,235.82 L8.40,236.12 L8.36,236.42 L8.29,236.72 L8.16,237.01 L8.00,237.30 L7.79,237.56 L7.54,237.80 L7.25,238.00 L6.93,238.16 L6.58,238.29 L6.21,238.36 L5.83,238.38 L5.44,238.35 L5.05,238.26 L4.67,238.12 L4.30,237.92 L3.96,237.66 L3.65,237.36 L3.38,237.01 L3.16,236.62 L2.99,236.20 L2.88,235.74 L2.84,235.27 L2.85,234.79 L2.94,234.31 L3.09,233.84 L3.31,233.38 L3.60,232.96 L3.95,232.57 L4.35,232.22 L4.80,231.93 L5.30,231.71 L5.83,231.55 L6.39,231.46 L6.96,231.45 L7.53,231.52 L8.10,231.67 L8.65,231.90 L9.17,232.21 L9.64,232.59 L10.07,233.04 L10.44,233.55 L10.74,234.11 L10.96,234.71 L11.09,235.35 L11.14,236.01 L11.10,236.67 L10.97,237.34 L10.74,237.98 L10.43,238.60 L10.02,239.17 L9.54,239.69 L8.99,240.14 L8.37,240.52 L7.70,240.82 L6.98,241.02 L6.24,241.12 L5.48,241.12 L4.73,241.02 L3.98,240.81 L3.26,240.50 L2.59,240.08 L1.97,239.58 L1.42,238.99 L0.95,238.32 L0.58,237.59 L0.30,236.81 L0.13,235.99 L0.08,235.14 L0.14,234.29 L0.32,233.45 L0.61,232.63 L1.02,231.85 L1.53,231.12 L2.15,230.47 L2.85,229.90 L3.63,229.43 L4.48,229.07 L5.37,228.82 L6.30,228.70 L7.24,228.70 L8.19,228.84 L9.11,229.10 L10.00,229.49 L10.83,230.00 L11.59,230.63 L12.27,231.36 L12.84,232.18 L13.30,233.08 L13.64,234.04 L13.84,235.05 L13.90,236.08 L13.83,237.12 L13.61,238.15 L13.25,239.14" fill="none" stroke="#333" stroke-width="1.15"/>
<path d="M0,249.5 C2,248.5 3.6,250 3,252.5 C2.2,255 0,256 0.5,257.5 C2,258.5 4,258 5,259.5 C5.5,261 5,262.5 7,262.8 C9,263 11,261.5 12,260" fill="none" stroke="#555" stroke-width="0.9"/>
<path d="M9.5,248 L13.8,251 L9,258.5 L6.5,260.5 L6.8,257 Z" fill="#f5a623" stroke="#4a3a10" stroke-width="0.8"/>
<path d="M7,256 L9.2,257.8 L6.5,260.5 Z" fill="#fff6d0"/>
<path d="M9.5,248 L11,249 L7.4,255 L6.8,254.5 Z" fill="#d8d040"/>
<path d="M0,268.6 L7.5,268.6 M0.8,270 C2.5,274 4,278 3.5,281 C3,283 1,282 0,280.5" fill="none" stroke="#444" stroke-width="0.9"/>
<path d="M10.5,267.8 L14.2,271.5 L11,276.5 L7.8,274.5 Z" fill="url(#gBlue)" stroke="#333" stroke-width="0.7"/>
<path d="M7.8,274.5 L11,276.5 L10,278 L7,276.5 Z" fill="#e8b830" stroke="#333" stroke-width="0.6"/>
<path d="M7.2,276.8 L9.8,278.2 L6,283.5 Z" fill="#222"/>
<path d="M1,288.5 C4.5,289 5,293 4.2,296.5 C3.6,299.5 3.5,302.5 7,303 C9.5,303.3 12,302 14,301.5 C11.5,301.2 9.8,302 7.5,301.5 C5.5,301 5.8,298.5 5.8,296 C6,292 5,288.5 1,288.5 Z" fill="#000"/>
<path d="M0,289.5 C2.5,291 3,294 2.5,297 C2,300 1.5,302 0,303" fill="none" stroke="#000" stroke-width="2.6"/>
<path d="M9,293 L11.4,294.4 L10.5,299.5 L6.3,302.2 L6.4,297.5 Z" fill="#e8c030" stroke="#333" stroke-width="0.7"/>
<path d="M9.5,289 L14,289.8 L12.5,294 L9,292.5 Z" fill="url(#gBlue)" stroke="#333" stroke-width="0.6"/>
<path d="M9,291.5 L12.8,292.8 L12.4,294.2 L8.8,293 Z" fill="#c02020"/>
<text x="-0.5" y="323.5" style="font-family:'Liberation Sans',sans-serif;font-weight:bold;font-size:17px;fill:#000">A</text>
<path d="M11,309.5 H14 M12.5,309.5 V323.8 M11,323.8 H14" fill="none" stroke="#333" stroke-width="0.8"/>
<path d="M0.5,333.5 C2,331.5 5,331.5 7,334 C5,336 2,336.5 0.5,335.5 Z" fill="#c8c8c8" opacity="0.9"/>
<circle cx="1.5" cy="331" r="0.9" fill="#222"/><circle cx="0.4" cy="333.8" r="0.9" fill="#222"/><circle cx="1.8" cy="336.8" r="0.9" fill="#222"/><circle cx="3.6" cy="332" r="0.6" fill="#666"/>
<path d="M7.5,335.2 C7.5,331.8 11.2,331.8 11.2,335.2 Z" fill="#bbb" stroke="#333" stroke-width="0.8"/>
<path d="M6.6,337 L12.4,336.4 C13.6,338.5 14.4,341 14.5,343.6 C13.6,344.8 12,345.3 11,345.2 C9.5,344.5 7.5,343.8 6.4,342.8 Z" fill="#58b83a" stroke="#2a4a1a" stroke-width="0.8"/>
<path d="M12,337.5 C13,339.5 13.6,342 13.5,344" fill="none" stroke="#c8f0a8" stroke-width="0.7"/>
<path d="M7,335 L11.4,334.8 L12,336.8 L6.8,337.2 Z" fill="#e0a830" stroke="#4a3a10" stroke-width="0.5"/>
<path d="M7,349.8 L13,354 L6.8,365.2 L0.6,360.8 Z" fill="url(#gSkin)" stroke="#333" stroke-width="1"/>
<ellipse cx="6.2" cy="384.6" rx="6.3" ry="1.6" fill="#90d090" stroke="#3a6a3a" stroke-width="0.8"/>
<path d="M4.6,372.4 L10,370.2 C12,369.7 13.2,371.2 14,374.8 L14.2,377.6 L5.8,381.8 Z" fill="url(#gBlue)" stroke="#222" stroke-width="0.9" stroke-linejoin="round"/>
<ellipse cx="3.6" cy="377.6" rx="1.7" ry="4.3" transform="rotate(-18 3.6 377.6)" fill="#cfe6f2" stroke="#222" stroke-width="0.8"/>
<path d="M1.3,374.4 C2.6,377 3.6,380 4,383.8 L5,383.8 C4.8,380 4,376.5 2.6,373.8 Z" fill="#48b048" stroke="#2a5a2a" stroke-width="0.4"/>
<path d="M3.8,370 L4.2,376" stroke="#777" stroke-width="1"/>
<rect x="0" y="391" width="14" height="14.5" fill="url(#gGrad)"/>
<line x1="2.5" y1="394.5" x2="11" y2="402.5" stroke="#222" stroke-width="0.9"/>
<rect x="1.2" y="393.2" width="2.6" height="2.6" fill="#fff" stroke="#222" stroke-width="0.9"/>
<rect x="9.7" y="401.2" width="2.6" height="2.6" fill="#fff" stroke="#222" stroke-width="0.9"/>
<path d="M2,413.5 L12.5,414 L12,423.8 L1.8,424 Z" fill="url(#gMesh)" stroke="#2e6e6e" stroke-width="0.6"/>
<rect x="0.6" y="412.3" width="2.7" height="2.7" fill="#fff" stroke="#111" stroke-width="1"/>
<rect x="11" y="412.3" width="2.7" height="2.7" fill="#fff" stroke="#111" stroke-width="1"/>
<rect x="0.6" y="422.3" width="2.7" height="2.7" fill="#fff" stroke="#111" stroke-width="1"/>
<rect x="11" y="422.3" width="2.7" height="2.7" fill="#fff" stroke="#111" stroke-width="1"/>
<path d="M2.4,446 L9,439" stroke="#333" stroke-width="2.6" stroke-linecap="round"/>
<path d="M2.4,446 L9,439" stroke="#a8c8e8" stroke-width="1.2" stroke-linecap="round"/>
<path d="M8,436 L11,433 C12,431.5 14.2,431.5 14.5,433.5 C14.8,435 13.5,436 12,437 L10.5,439 Z" fill="#111"/>
<circle cx="2.6" cy="446.6" r="1.2" fill="#6080a8"/>
<path d="M4.5,456 L2.5,463.5 M7.5,454.2 L11,455.5 L12,463.5" fill="none" stroke="#444" stroke-width="0.9"/>
<rect x="2.3" y="452.3" width="5" height="4.3" fill="#b8d4f0" stroke="#333" stroke-width="0.9"/>
<rect x="4.4" y="458.7" width="5.4" height="2.8" fill="#f0c830" stroke="#444" stroke-width="0.8"/>
<rect x="0" y="463.3" width="4.4" height="4.4" fill="#b8d4f0" stroke="#333" stroke-width="0.9"/>
<rect x="9.6" y="463.3" width="4.6" height="4.4" fill="#b8d4f0" stroke="#333" stroke-width="0.9"/>
<path d="M24.9,46 V45.2 C24.9,42.6 28.5,42.6 28.5,45.2 V46" fill="none" stroke="#888" stroke-width="1.1"/>
<rect x="24.2" y="45.6" width="5" height="3" fill="#f0b020" stroke="#7a5a10" stroke-width="0.5"/>
<rect x="24.6" y="46.6" width="4.2" height="0.9" fill="#a04a10" opacity="0.6"/>
<path d="M28.9,55 L34.2,55 L28.9,61.5 Z" fill="#000"/>
<!-- upper red rect -->
<g filter="url(#blur1)" opacity="0.32">
<path d="M-2,2.5 H363 V72.5 H-2" fill="none" stroke="#000" stroke-width="2"/>
</g>
<path d="M-2,1.5 H361.5 V71 H-2" fill="none" stroke="#ff1414" stroke-width="1.5"/>
<!-- tooltip -->
<rect x="33" y="33" width="301" height="24" fill="#000" opacity="0.3" filter="url(#blur1)"/>
<rect x="31.5" y="31" width="300" height="23.5" fill="#ffffe1" stroke="#767676" stroke-width="1"/>
<text x="0" y="49.8" class="tt" transform="translate(32.8,0) scale(0.9435,1)">Insert new nodes into selected segments</text>

</svg>
</body></html>
